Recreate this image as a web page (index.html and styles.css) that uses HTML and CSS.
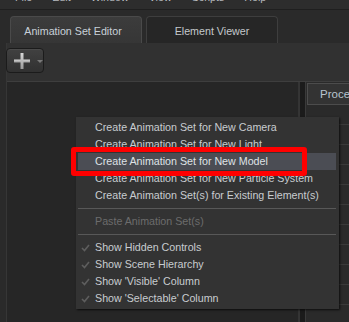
FILE: index.html
```html
<!DOCTYPE html>
<html lang="en">
<head>
  <meta charset="UTF-8" />
  <title>Animation Set Editor</title>
  <link rel="stylesheet" href="styles.css">
</head>
<body>
  <div class="app">
    <div class="menubar">
      <span>File</span>
      <span>Edit</span>
      <span>Window</span>
      <span>View</span>
      <span>Scripts</span>
      <span>Help</span>
    </div>

    <div class="tabbar">
      <div class="tab active">Animation Set Editor</div>
      <div class="tab">Element Viewer</div>
    </div>

    <div class="dock">
      <div class="toolbar">
        <button class="add-btn">
          <svg class="plus" width="16" height="16" viewBox="0 0 16 16">
            <defs>
              <linearGradient id="plusg" x1="0" y1="0" x2="0" y2="1">
                <stop offset="0" stop-color="#d8d8d8" />
                <stop offset="1" stop-color="#9a9a9a" />
              </linearGradient>
            </defs>
            <rect x="0" y="6.5" width="16" height="3" fill="url(#plusg)" />
            <rect x="6.5" y="0" width="3" height="16" fill="url(#plusg)" />
          </svg>
          <span class="caret"></span>
        </button>
      </div>
      <div class="workspace">
        <div class="tree-pane"></div>
        <div class="splitter"></div>
        <div class="props-pane">
          <div class="props-header">Procedural</div>
          <div class="props-row"></div>
          <div class="props-row"></div>
          <div class="props-row"></div>
          <div class="props-row"></div>
          <div class="props-row"></div>
          <div class="props-row"></div>
          <div class="props-row"></div>
          <div class="props-row"></div>
          <div class="props-row"></div>
          <div class="props-row"></div>
        </div>
      </div>
    </div>

    <!-- popup from the add button -->
    <div class="context-menu">
      <div class="menu-item">Create Animation Set for New Camera</div>
      <div class="menu-item">Create Animation Set for New Light</div>
      <div class="menu-item hover">Create Animation Set for New Model</div>
      <div class="menu-item">Create Animation Set for New Particle System</div>
      <div class="menu-item">Create Animation Set(s) for Existing Element(s)</div>
      <div class="menu-sep"></div>
      <div class="menu-item disabled">Paste Animation Set(s)</div>
      <div class="menu-sep"></div>
      <div class="menu-item checked"><svg class="check" width="9" height="8" viewBox="0 0 9 8"><polyline points="1,4 3.5,6.5 8,1" fill="none" stroke="#5e5e5e" stroke-width="1.6" /></svg>Show Hidden Controls</div>
      <div class="menu-item checked"><svg class="check" width="9" height="8" viewBox="0 0 9 8"><polyline points="1,4 3.5,6.5 8,1" fill="none" stroke="#5e5e5e" stroke-width="1.6" /></svg>Show Scene Hierarchy</div>
      <div class="menu-item checked"><svg class="check" width="9" height="8" viewBox="0 0 9 8"><polyline points="1,4 3.5,6.5 8,1" fill="none" stroke="#5e5e5e" stroke-width="1.6" /></svg>Show 'Visible' Column</div>
      <div class="menu-item checked"><svg class="check" width="9" height="8" viewBox="0 0 9 8"><polyline points="1,4 3.5,6.5 8,1" fill="none" stroke="#5e5e5e" stroke-width="1.6" /></svg>Show 'Selectable' Column</div>
    </div>

    <div class="callout"></div>
  </div>
</body>
</html>
```

FILE: styles.css
```css
body {
  margin: 0;
  background: #2a2a2a;
  font-family: "Liberation Sans", Arial, sans-serif;
  font-size: 10.7px;
  color: #c8ccd0;
}
.app {
  position: relative;
  width: 349px;
  height: 322px;
  overflow: hidden;
  background: #2a2a2a;
}
.menubar {
  display: flex;
  gap: 20px;
  height: 9px;
  padding-left: 15px;
  overflow: hidden;
  background: #2d2d2d;
  border-bottom: 1px solid #1f1f1f;
  color: #b8bcc0;
}
.menubar span {
  margin-top: -9px;
  line-height: 13px;
}
.tabbar {
  display: flex;
  align-items: flex-end;
  gap: 4px;
  height: 33px;
  padding-left: 10px;
  background: #2a2a2a;
}
.tab {
  width: 130px;
  height: 23px;
  padding-top: 3px;
  line-height: 23px;
  text-align: center;
  background: #262626;
  border: 1px solid #3e3e3e;
  border-bottom: none;
  border-radius: 4px 4px 0 0;
  color: #c4c8cc;
}
.tab.active {
  background: linear-gradient(#3c3c3c, #363636);
  border-color: #4a4a4a;
  color: #c8d0d8;
  padding-right: 6px;
  width: 124px;
}
.dock {
  display: flex;
  flex-direction: column;
  height: 279px;
  margin-left: 6px;
  background: #313131;
  border-left: 1px solid #363636;
}
.toolbar {
  height: 33px;
  padding-top: 5px;
  border-bottom: 1px solid #3e3e3e;
}
.add-btn {
  display: flex;
  align-items: center;
  width: 38px;
  height: 25px;
  margin-left: -1px;
  padding: 0 0 0 7px;
  background: linear-gradient(#414141, #313131);
  border: 1px solid #1b1b1b;
  border-radius: 4px;
  box-shadow: inset 0 1px 0 #4a4a4a;
}
.caret {
  width: 0;
  height: 0;
  margin-left: 7px;
  margin-top: 2px;
  border-left: 3px solid transparent;
  border-right: 3px solid transparent;
  border-top: 3px solid #7a7a7a;
}
.workspace {
  display: flex;
  flex: 1;
  background: #262626;
}
.tree-pane {
  flex: 0 0 auto;
  width: 291px;
  background: #262626;
  border-right: 1px solid #343434;
}
.splitter {
  flex: 0 0 auto;
  width: 5px;
  background: #1b1b1b;
  border-left: 1px solid #353535;
  border-right: 1px solid #3a3a3a;
}
.props-pane {
  flex: 1;
  min-width: 0;
  overflow: hidden;
  padding-top: 1px;
  background: #2a2a2a;
}
.props-header {
  height: 20px;
  line-height: 20px;
  padding-left: 12px;
  margin-left: 1px;
  background: #333;
  border: 1px solid #4c4c4c;
  border-right: none;
  color: #b8c4d0;
  font-size: 11.5px;
  white-space: nowrap;
}
.props-row {
  height: 19px;
  border-bottom: 1px solid #3a3a3a;
}
.context-menu {
  position: absolute;
  left: 76px;
  top: 117px;
  width: 258px;
  padding: 2px 3px 2px 2px;
  background: #333333;
  box-shadow: 1px 1px 2px rgba(0, 0, 0, 0.7);
}
.menu-item {
  position: relative;
  height: 17px;
  line-height: 17px;
  padding-left: 17px;
  color: #c8ccd0;
  white-space: nowrap;
}
.menu-item.hover {
  background: #4b4d54;
  color: #dfe2e6;
}
.menu-item.disabled {
  color: #6c6c6c;
}
.check {
  position: absolute;
  left: 3px;
  top: 5px;
}
.menu-sep {
  height: 1px;
  margin: 4px 0 4px 0;
  background: #585858;
}
.callout {
  position: absolute;
  left: 71px;
  top: 147px;
  width: 226px;
  height: 19px;
  border: 5px solid #ff0000;
  border-radius: 3px;
}
```
